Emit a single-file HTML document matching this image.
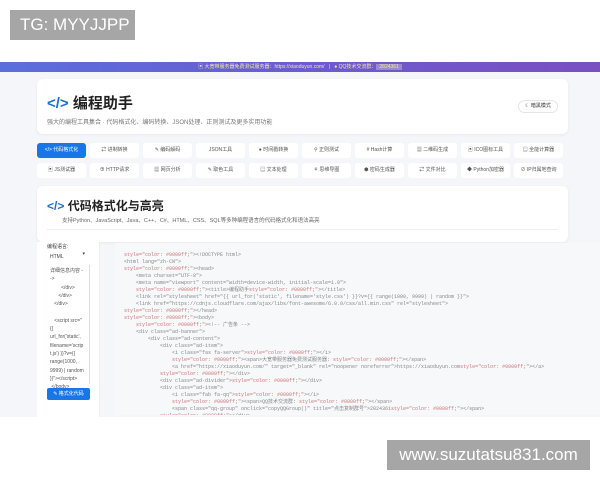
<!DOCTYPE html>
<html><head><meta charset="utf-8">
<style>
*{margin:0;padding:0;box-sizing:border-box}
body{width:600px;height:480px;overflow:hidden;background:#fff;font-family:"Liberation Sans","Noto Sans CJK SC",sans-serif;position:relative}
.wm1{position:absolute;left:10px;top:10px;width:125px;height:30px;background:#a6a6a6;color:#fff;font-size:17px;line-height:30px;padding-left:10px}
.wm2{position:absolute;left:387px;top:440px;width:203px;height:30px;background:#a6a6a6;color:#fff;font-size:17px;line-height:30px;text-align:center;z-index:5}
.banner{position:absolute;left:0;top:62px;width:600px;height:10px;background:linear-gradient(90deg,#5a6fdc,#6b5cd0 50%,#7a4fc0);color:#f3e8a0;font-size:5px;line-height:10px;text-align:center}
.page{position:absolute;left:0;top:72px;width:600px;height:345px;background:#f4f6f9}
.card{position:absolute;background:#fff;border-radius:6px;box-shadow:0 1px 3px rgba(0,0,0,.06)}
.btn{position:absolute;width:49px;height:15px;background:#fff;border-radius:3px;font-size:5px;color:#555;text-align:center;line-height:15px}
.code{position:absolute;left:115px;top:243px;width:485px;height:172px;background:#f7f8fa;font-family:"Liberation Mono","Noto Sans CJK SC",monospace;font-size:5px;color:#888;line-height:7px;padding:9px 0 0 9px;white-space:pre;overflow:hidden}
.r{color:#c77}
</style></head><body>
<div class="wm1">TG: MYYJJPP</div>
<div class="banner">▣ 大宽带服务器免费测试服务器：https://xiaoduyun.com/ &nbsp; | &nbsp; ● QQ技术交流群：<span style="background:#9a8ad0;padding:0 3px">2824361</span></div>
<div class="page"></div>
<div class="card" style="left:37px;top:79px;width:531px;height:55px">
 <div style="position:absolute;left:10px;top:13px;font-size:15px;font-weight:bold;color:#222"><span style="color:#1a6fd0">&lt;/&gt;</span> 编程助手</div>
 <div style="position:absolute;left:10px;top:38px;font-size:6px;color:#777">强大的编程工具集合 · 代码格式化、编码转换、JSON处理、正则测试及更多实用功能</div>
 <div style="position:absolute;left:481px;top:21px;width:40px;height:13px;border:1px solid #e5e5e5;border-radius:7px;font-size:5px;line-height:11px;text-align:center;color:#333">☾ 暗黑模式</div>
</div>
<div class="btn" style="left:37px;top:143px;background:#1877e6;color:#fff">&lt;/&gt; 代码格式化</div>
<div class="btn" style="left:90px;top:143px">⇄ 进制转换</div>
<div class="btn" style="left:143px;top:143px">✎ 编码解码</div>
<div class="btn" style="left:196px;top:143px">JSON工具</div>
<div class="btn" style="left:249px;top:143px">● 时间戳转换</div>
<div class="btn" style="left:302px;top:143px">⚲ 正则测试</div>
<div class="btn" style="left:355px;top:143px"># Hash计算</div>
<div class="btn" style="left:408px;top:143px">▦ 二维码生成</div>
<div class="btn" style="left:461px;top:143px">▣ ICO图标工具</div>
<div class="btn" style="left:514px;top:143px">▤ 全能计算器</div>
<div class="btn" style="left:37px;top:163px">▣ JS测试器</div>
<div class="btn" style="left:90px;top:163px">⊕ HTTP请求</div>
<div class="btn" style="left:143px;top:163px">▦ 网页分析</div>
<div class="btn" style="left:196px;top:163px">✎ 取色工具</div>
<div class="btn" style="left:249px;top:163px">▤ 文本处理</div>
<div class="btn" style="left:302px;top:163px">⚘ 思维导图</div>
<div class="btn" style="left:355px;top:163px">⬢ 密码生成器</div>
<div class="btn" style="left:408px;top:163px">⇄ 文件对比</div>
<div class="btn" style="left:461px;top:163px">◆ Python加密器</div>
<div class="btn" style="left:514px;top:163px">⊘ IP归属地查询</div>
<div class="card" style="left:37px;top:186px;width:531px;height:56px">
 <div style="position:absolute;left:10px;top:11px;font-size:12px;font-weight:bold;color:#222"><span style="color:#1a6fd0">&lt;/&gt;</span> 代码格式化与高亮</div>
 <div style="position:absolute;left:25px;top:30px;font-size:5.5px;color:#666">支持Python、JavaScript、Java、C++、C#、HTML、CSS、SQL等多种编程语言的代码格式化和语法高亮</div>
 <div style="position:absolute;left:10px;top:43px;width:511px;height:1px;background:#eee"></div>
</div>
<div style="position:absolute;left:37px;top:242px;width:62px;height:175px;background:#fff"></div>
<div style="position:absolute;left:99px;top:242px;width:1px;height:175px;background:#eee"></div>
<div style="position:absolute;left:47px;top:243px;font-size:5px;color:#444">编程语言:</div>
<div style="position:absolute;left:47px;top:250px;width:43px;height:14px;font-size:5px;color:#444;line-height:14px;padding-left:3px">HTML<span style="position:absolute;right:5px;top:-3px">▾</span></div>
<div style="position:absolute;left:47px;top:265px;width:43px;height:119px;border-right:1px solid #ddd;font-size:5px;color:#555;line-height:8.3px;padding:2px 3px;white-space:pre">详细信息内容 -
-&gt;
        &lt;/div&gt;
      &lt;/div&gt;
   &lt;/div&gt;

   &lt;script src="
{{
url_for('static',
filename='scrip
t.js') }}?v={{
range(1000,
9999) | random
}}"&gt;&lt;/script&gt;
 &lt;/body&gt;
 &lt;/html&gt;</div>
<div style="position:absolute;left:47px;top:388px;width:43px;height:12px;background:#1877e6;border-radius:2px;color:#fff;font-size:5px;line-height:12px;text-align:center">✎ 格式化代码</div>
<div class="code"><span class="r">style="color: #0000ff;"</span>&gt;&lt;!DOCTYPE html&gt;
&lt;html lang="zh-CN"&gt;
<span class="r">style="color: #0000ff;"</span>&gt;&lt;head&gt;
    &lt;meta charset="UTF-8"&gt;
    &lt;meta name="viewport" content="width=device-width, initial-scale=1.0"&gt;
    <span class="r">style="color: #0000ff;"</span>&gt;&lt;title&gt;编程助手<span class="r">style="color: #0000ff;"</span>&gt;&lt;/title&gt;
    &lt;link rel="stylesheet" href="{{ url_for('static', filename='style.css') }}?v={{ range(1000, 9999) | random }}"&gt;
    &lt;link href="https://cdnjs.cloudflare.com/ajax/libs/font-awesome/6.0.0/css/all.min.css" rel="stylesheet"&gt;
<span class="r">style="color: #0000ff;"</span>&gt;&lt;/head&gt;
<span class="r">style="color: #0000ff;"</span>&gt;&lt;body&gt;
    <span class="r">style="color: #0000ff;"</span>&gt;&lt;!-- 广告条 --&gt;
    &lt;div class="ad-banner"&gt;
        &lt;div class="ad-content"&gt;
            &lt;div class="ad-item"&gt;
                &lt;i class="fas fa-server"&gt;<span class="r">style="color: #0000ff;"</span>&gt;&lt;/i&gt;
                <span class="r">style="color: #0000ff;"</span>&gt;&lt;span&gt;大宽带服务器免费测试服务器: <span class="r">style="color: #0000ff;"</span>&gt;&lt;/span&gt;
                &lt;a href="https://xiaoduyun.com/" target="_blank" rel="noopener noreferrer"&gt;https://xiaoduyun.com<span class="r">style="color: #0000ff;"</span>&gt;&lt;/a&gt;
            <span class="r">style="color: #0000ff;"</span>&gt;&lt;/div&gt;
            &lt;div class="ad-divider"&gt;<span class="r">style="color: #0000ff;"</span>&gt;&lt;/div&gt;
            &lt;div class="ad-item"&gt;
                &lt;i class="fab fa-qq"&gt;<span class="r">style="color: #0000ff;"</span>&gt;&lt;/i&gt;
                <span class="r">style="color: #0000ff;"</span>&gt;&lt;span&gt;QQ技术交流群: <span class="r">style="color: #0000ff;"</span>&gt;&lt;/span&gt;
                &lt;span class="qq-group" onclick="copyQQGroup()" title="点击复制群号"&gt;2824361<span class="r">style="color: #0000ff;"</span>&gt;&lt;/span&gt;
            <span class="r">style="color: #0000ff;"</span>&gt;&lt;/div&gt;</div>
<div class="wm2">www.suzutatsu831.com</div>
</body></html>
